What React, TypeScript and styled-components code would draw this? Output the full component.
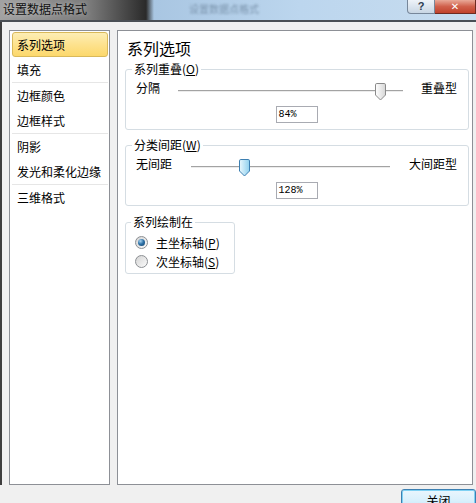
import React from "react";
import styled, { createGlobalStyle } from "styled-components";

const GlobalStyle = createGlobalStyle`
  html, body {
    margin: 0;
    padding: 0;
    background: #f0f0f0;
  }
`;

const navGroups = [
  ["系列选项", "填充"],
  ["边框颜色", "边框样式"],
  ["阴影", "发光和柔化边缘"],
  ["三维格式"],
];

const Thumb = ({ blue }: { blue?: boolean }) => {
  const id = blue ? "thumbBlue" : "thumbGrey";
  return (
    <svg width="11" height="18" viewBox="0 0 11 18">
      <defs>
        <linearGradient id={id} x1="0" y1="0" x2="1" y2="0">
          <stop offset="0" stopColor={blue ? "#e8f7fd" : "#ffffff"} />
          <stop offset="1" stopColor={blue ? "#8fd0ee" : "#d6d6d6"} />
        </linearGradient>
      </defs>
      <path
        d="M1.8 0.5 H9.2 Q10.5 0.5 10.5 1.8 V12 L5.5 17 L0.5 12 V1.8 Q0.5 0.5 1.8 0.5 Z"
        fill={`url(#${id})`}
        stroke={blue ? "#3c7fb1" : "#8a8a8a"}
      />
    </svg>
  );
};

type SliderProps = {
  legend: string;
  keyChar: string;
  left: string;
  right: string;
  value: number;
  text: string;
  blue?: boolean;
  gapL: number;
  gapR: number;
};

const SliderGroup = ({ legend, keyChar, left, right, value, text, blue, gapL, gapR }: SliderProps) => (
  <Group>
    <Legend>
      {legend}(<u>{keyChar}</u>)
    </Legend>
    <SliderRow>
      <span>{left}</span>
      <Track $gapL={gapL} $gapR={gapR}>
        <ThumbWrap style={{ left: `${value}%` }}>
          <Thumb blue={blue} />
        </ThumbWrap>
      </Track>
      <span>{right}</span>
    </SliderRow>
    <ValueBox>{text}</ValueBox>
  </Group>
);

export default function App() {
  return (
    <Window>
      <GlobalStyle />
      <TitleBar>
        <TitleText>设置数据点格式</TitleText>
        <GlassText>设置数据点格式</GlassText>
        <Caption>
          <HelpButton>?</HelpButton>
          <CloseButton>✕</CloseButton>
        </Caption>
      </TitleBar>
      <Body>
        <Nav>
          {navGroups.map((group, gi) => (
            <NavGroup key={gi} $last={gi === navGroups.length - 1}>
              {group.map((item) => (
                <NavItem key={item} $active={item === "系列选项"}>
                  {item}
                </NavItem>
              ))}
            </NavGroup>
          ))}
        </Nav>
        <Panel>
          <PanelTitle>系列选项</PanelTitle>
          <SliderGroup
            legend="系列重叠"
            keyChar="O"
            left="分隔"
            right="重叠型"
            value={90}
            text="84%"
            gapL={18}
            gapR={18}
          />
          <Spacer $h={8} />
          <SliderGroup
            legend="分类间距"
            keyChar="W"
            left="无间距"
            right="大间距型"
            value={26.5}
            text="128%"
            blue
            gapL={19}
            gapR={19}
          />
          <Spacer $h={9} />
          <RadioGroup>
            <Legend>系列绘制在</Legend>
            <RadioRow>
              <Radio $checked />
              <span>
                主坐标轴(<u>P</u>)
              </span>
            </RadioRow>
            <RadioRow>
              <Radio />
              <span>
                次坐标轴(<u>S</u>)
              </span>
            </RadioRow>
          </RadioGroup>
        </Panel>
      </Body>
      <Footer>
        <DialogButton>关闭</DialogButton>
      </Footer>
    </Window>
  );
}

const Window = styled.div`
  width: 476px;
  height: 503px;
  display: flex;
  flex-direction: column;
  overflow: hidden;
  background: #f0f0f0;
  font-family: "Noto Sans CJK SC", "Liberation Sans", sans-serif;
  font-size: 12px;
  color: #000;
`;

const TitleBar = styled.div`
  height: 20px;
  flex-shrink: 0;
  display: flex;
  align-items: flex-start;
  border-bottom: 2px solid #4a4f55;
  background: linear-gradient(
    90deg,
    #a2a2a2 0,
    #7a7a7a 90px,
    #3a3a3a 135px,
    #2a2a2a 146px,
    #a9c6e2 154px,
    #bcd6ee 300px,
    #c7dcef 100%
  );
`;

const TitleText = styled.span`
  padding-left: 3px;
  line-height: 18px;
  color: #101010;
  font-size: 12px;
  text-shadow: 0 0 4px rgba(255, 255, 255, 0.5);
`;

const GlassText = styled.span`
  margin-left: 102px;
  line-height: 18px;
  font-size: 10px;
  color: #7c95ae;
  filter: blur(1.2px);
`;

const Caption = styled.div`
  margin-left: auto;
  display: flex;
`;

const HelpButton = styled.div`
  width: 28px;
  height: 14px;
  box-sizing: border-box;
  border: 1px solid #77879a;
  border-top: none;
  border-radius: 0 0 0 4px;
  background: linear-gradient(#eef3f8, #c8d6e4);
  color: #2d3d52;
  font-family: "Liberation Sans", sans-serif;
  font-weight: bold;
  font-size: 11px;
  line-height: 13px;
  text-align: center;
`;

const CloseButton = styled.div`
  width: 41px;
  height: 14px;
  box-sizing: border-box;
  border: 1px solid #6d2b22;
  border-top: none;
  border-left: none;
  background: linear-gradient(#e9a998, #d0604b 50%, #c0422c);
  color: #fff;
  font-family: "DejaVu Sans", sans-serif;
  font-weight: bold;
  font-size: 10px;
  line-height: 13px;
  text-align: center;
`;

const Body = styled.div`
  flex: 1;
  display: flex;
  gap: 7px;
  padding: 8px 3px 0 7px;
  border-left: 2px solid #3e3e3e;
  min-height: 0;
`;

const Nav = styled.div`
  width: 101px;
  box-sizing: border-box;
  background: #fff;
  border: 1px solid #8d9096;
  padding: 1px 1px 0 2px;
`;

const NavGroup = styled.div<{ $last?: boolean }>`
  border-bottom: ${(p) => (p.$last ? "none" : "1px solid #e6e6e6")};
`;

const NavItem = styled.div<{ $active?: boolean }>`
  height: 25px;
  box-sizing: border-box;
  padding-left: 4px;
  line-height: 23px;
  white-space: nowrap;
  border: 1px solid ${(p) => (p.$active ? "#d9b95a" : "transparent")};
  border-radius: 3px;
  background: ${(p) =>
    p.$active ? "linear-gradient(#fdeeb5, #fde28e 50%, #fcd86c)" : "transparent"};
`;

const Panel = styled.div`
  flex: 1;
  box-sizing: border-box;
  background: #fff;
  border: 1px solid #8d9096;
  padding: 7px 3px 0 7px;
`;

const PanelTitle = styled.div`
  font-size: 16px;
  line-height: 20px;
  padding-left: 2px;
  margin-bottom: 4px;
`;

const Spacer = styled.div<{ $h: number }>`
  height: ${(p) => p.$h}px;
`;

const Group = styled.fieldset`
  margin: 0;
  min-width: 0;
  padding: 0 11px 6px 10px;
  border: 1px solid #d5dde3;
  border-radius: 3px;
`;

const Legend = styled.legend`
  margin-left: -4px;
  padding: 0 2px;
  font-size: 12px;
  line-height: 14px;
  color: #000;
`;

const SliderRow = styled.div`
  margin-top: 2px;
  height: 20px;
  display: flex;
  align-items: center;
  line-height: 18px;
`;

const Track = styled.div<{ $gapL: number; $gapR: number }>`
  position: relative;
  flex: 1;
  height: 20px;
  margin: 0 ${(p) => p.$gapR}px 0 ${(p) => p.$gapL}px;

  &::before {
    content: "";
    position: absolute;
    left: 0;
    right: 0;
    top: 12px;
    height: 1px;
    background: #a3a3a3;
    box-shadow: 0 1px 0 #ececec;
  }
`;

const ThumbWrap = styled.div`
  position: absolute;
  top: 5px;
  width: 11px;
  height: 18px;
  margin-left: -5px;
  line-height: 0;
`;

const ValueBox = styled.div`
  width: 42px;
  height: 17px;
  box-sizing: border-box;
  margin: 8px auto 0;
  border: 1px solid #a9abb2;
  padding-left: 2px;
  font-family: "Liberation Mono", monospace;
  font-size: 10px;
  line-height: 15px;
`;

const RadioGroup = styled(Group)`
  width: 110px;
  box-sizing: border-box;
  padding: 4px 0 2px 9px;
`;

const RadioRow = styled.div`
  height: 19px;
  display: flex;
  align-items: center;
  gap: 8px;
  line-height: 18px;
`;

const Radio = styled.span<{ $checked?: boolean }>`
  width: 13px;
  height: 13px;
  box-sizing: border-box;
  border-radius: 50%;
  border: 1px solid #8c8f93;
  background: linear-gradient(135deg, #d4d4d4, #fbfbfb);
  display: flex;
  align-items: center;
  justify-content: center;

  &::after {
    content: "";
    width: 7px;
    height: 7px;
    border-radius: 50%;
    display: ${(p) => (p.$checked ? "block" : "none")};
    background: radial-gradient(circle at 35% 30%, #a9d3f0 0, #2f73a8 45%, #0f3e68 100%);
  }
`;

const Footer = styled.div`
  height: 18px;
  flex-shrink: 0;
  display: flex;
  justify-content: flex-end;
  align-items: flex-start;
  padding-top: 4px;
  box-sizing: border-box;
  overflow: visible;
`;

const DialogButton = styled.div`
  width: 75px;
  height: 23px;
  flex-shrink: 0;
  box-sizing: border-box;
  border: 1px solid #3c7fb1;
  border-radius: 3px;
  box-shadow: inset 0 0 0 1px #7fd1f3;
  background: linear-gradient(#eaf6fd, #d9f0fc 50%, #bee6fd);
  text-align: center;
  line-height: 21px;
  font-size: 12px;
`;
